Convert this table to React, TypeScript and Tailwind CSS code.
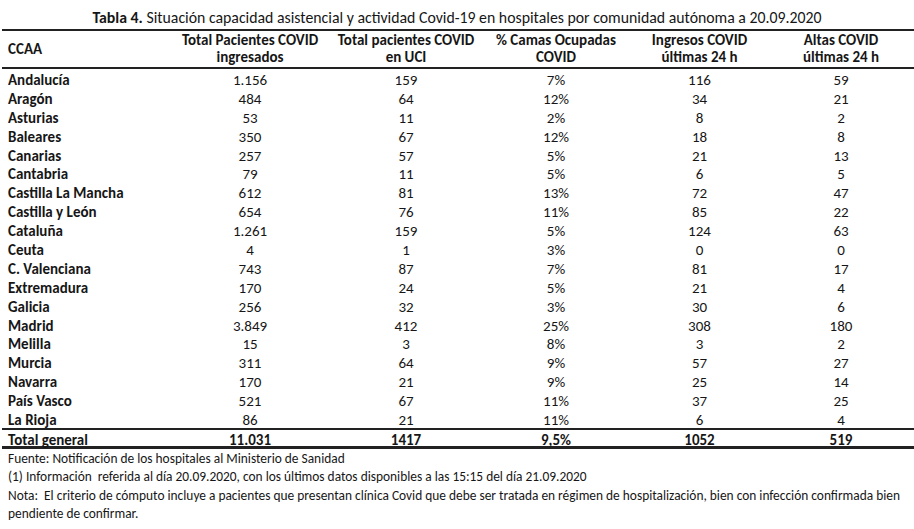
import React from "react";

const rows: [string, string, string, string, string, string][] = [
  ["Andalucía", "1.156", "159", "7%", "116", "59"],
  ["Aragón", "484", "64", "12%", "34", "21"],
  ["Asturias", "53", "11", "2%", "8", "2"],
  ["Baleares", "350", "67", "12%", "18", "8"],
  ["Canarias", "257", "57", "5%", "21", "13"],
  ["Cantabria", "79", "11", "5%", "6", "5"],
  ["Castilla La Mancha", "612", "81", "13%", "72", "47"],
  ["Castilla y León", "654", "76", "11%", "85", "22"],
  ["Cataluña", "1.261", "159", "5%", "124", "63"],
  ["Ceuta", "4", "1", "3%", "0", "0"],
  ["C. Valenciana", "743", "87", "7%", "81", "17"],
  ["Extremadura", "170", "24", "5%", "21", "4"],
  ["Galicia", "256", "32", "3%", "30", "6"],
  ["Madrid", "3.849", "412", "25%", "308", "180"],
  ["Melilla", "15", "3", "8%", "3", "2"],
  ["Murcia", "311", "64", "9%", "57", "27"],
  ["Navarra", "170", "21", "9%", "25", "14"],
  ["País Vasco", "521", "67", "11%", "37", "25"],
  ["La Rioja", "86", "21", "11%", "6", "4"],
];

const cols = "grid grid-cols-[169px_158px_154px_146px_141px_142px]";

export default function App() {
  return (
    <div
      className="w-[914px] h-[529px] bg-white text-[#161616] overflow-hidden"
      style={{ fontFamily: "Carlito, Calibri, Lato, 'Liberation Sans', sans-serif" }}
    >
      <div className="h-[29px] flex items-end justify-center pb-[2px] text-[15.8px] leading-[19px] whitespace-nowrap">
        <span>
          <span className="font-bold">Tabla 4.</span> Situación capacidad asistencial y actividad Covid-19 en hospitales por comunidad autónoma a 20.09.2020
        </span>
      </div>
      <div className="ml-[2px] border-t-2 border-[#222]">
        <div className={`${cols} h-[38px] border-b-2 border-[#222] font-bold text-[15px] leading-[17px] items-center`}>
          <div className="pl-[6px]">CCAA</div>
          <div className="text-center">Total Pacientes COVID<br />ingresados</div>
          <div className="text-center">Total pacientes COVID<br />en UCI</div>
          <div className="text-center">% Camas Ocupadas<br />COVID</div>
          <div className="text-center">Ingresos COVID<br />últimas 24 h</div>
          <div className="text-center">Altas COVID<br />últimas 24 h</div>
        </div>
        <div className="text-[15px]">
          {rows.map((r) => (
            <div key={r[0]} className={`${cols} h-[18.9px] pt-[3px] items-center leading-[16px]`}>
              <div className="pl-[6px] font-bold">{r[0]}</div>
              {r.slice(1).map((v, i) => (
                <div key={i} className="text-center">{v}</div>
              ))}
            </div>
          ))}
        </div>
        <div className={`${cols} h-[21px] pt-[2px] items-center border-t-2 border-b-[3px] border-[#222] font-bold text-[15px] leading-[16px]`}>
          <div className="pl-[6px]">Total general</div>
          <div className="text-center">11.031</div>
          <div className="text-center">1417</div>
          <div className="text-center">9,5%</div>
          <div className="text-center">1052</div>
          <div className="text-center">519</div>
        </div>
      </div>
      <div className="pl-[8px] pt-[1px] text-[13.4px] leading-[18.3px] whitespace-nowrap">
        <div>Fuente: Notificación de los hospitales al Ministerio de Sanidad</div>
        <div>(1) Información&nbsp; referida al día 20.09.2020, con los últimos datos disponibles a las 15:15 del día 21.09.2020</div>
        <div>Nota:&nbsp; El criterio de cómputo incluye a pacientes que presentan clínica Covid que debe ser tratada en régimen de hospitalización, bien con infección confirmada bien</div>
        <div>pendiente de confirmar.</div>
      </div>
    </div>
  );
}
